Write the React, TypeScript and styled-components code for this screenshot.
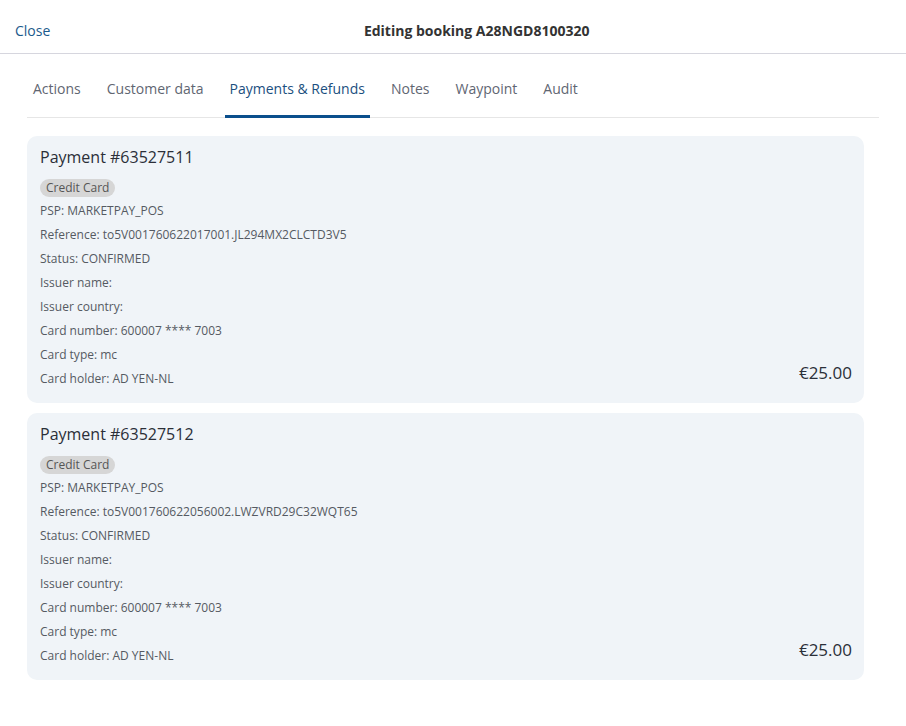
import React from "react";
import styled, { createGlobalStyle } from "styled-components";

const Global = createGlobalStyle`
  html, body { margin: 0; padding: 0; background: #ffffff; }
  body { font-family: "Open Sans", "Liberation Sans", sans-serif; color: #333; }
  * { box-sizing: border-box; }
`;

const Page = styled.div`
  width: 906px;
  min-height: 726px;
  background: #fff;
`;

const Header = styled.header`
  height: 54px;
  display: flex;
  align-items: center;
  padding: 7px 15px 0;
  border-bottom: 1px solid #d6d6de;
`;

const CloseLink = styled.a`
  font-size: 14px;
  color: #1b5a8c;
  cursor: pointer;
`;

const Title = styled.h1`
  flex: 1;
  margin: 0;
  padding-left: 12px;
  text-align: center;
  font-size: 14px;
  font-weight: 700;
  color: #333;
`;

const Body = styled.div`
  padding: 0 27px;
`;

const Tabs = styled.nav`
  display: flex;
  gap: 16px;
  margin-top: 16px;
  padding-left: 1px;
  border-bottom: 1px solid #e6e6e6;
`;

const Tab = styled.button<{ $active?: boolean }>`
  background: none;
  border: none;
  font-family: inherit;
  font-size: 14px;
  padding: 9px 5px 17px;
  margin-bottom: -1px;
  color: ${(p) => (p.$active ? "#1b4f80" : "#5f6672")};
  border-bottom: 3px solid ${(p) => (p.$active ? "#0b4f8c" : "transparent")};
  cursor: pointer;
`;

const List = styled.div`
  display: flex;
  flex-direction: column;
  gap: 10px;
  margin-top: 18px;
  width: 837px;
`;

const Card = styled.section`
  background: #f0f4f8;
  border-radius: 10px;
  padding: 10px 12px 12px 13px;
  display: flex;
  justify-content: space-between;
  align-items: flex-end;
`;

const Info = styled.div`
  display: flex;
  flex-direction: column;
`;

const CardTitle = styled.h2`
  margin: 0 0 11px;
  font-size: 16px;
  font-weight: 400;
  color: #2b2f38;
  line-height: 22px;
`;

const Badge = styled.span`
  align-self: flex-start;
  background: #d6d6d6;
  color: #555;
  border-radius: 9px;
  font-size: 12px;
  line-height: 18px;
  padding: 0 6px;
  margin-bottom: 2px;
`;

const Row = styled.div`
  font-size: 12px;
  line-height: 24px;
  color: #555a62;
`;

const Amount = styled.div`
  font-size: 17px;
  line-height: 24px;
  color: #2b2f38;
  margin-bottom: 6px;
`;

const payments = [
  { id: "63527511", ref: "to5V001760622017001.JL294MX2CLCTD3V5" },
  { id: "63527512", ref: "to5V001760622056002.LWZVRD29C32WQT65" },
];

export default function App() {
  const tabs = ["Actions", "Customer data", "Payments & Refunds", "Notes", "Waypoint", "Audit"];
  return (
    <Page>
      <Global />
      <Header>
        <CloseLink>Close</CloseLink>
        <Title>Editing booking A28NGD8100320</Title>
      </Header>
      <Body>
        <Tabs>
          {tabs.map((t) => (
            <Tab key={t} $active={t === "Payments & Refunds"}>{t}</Tab>
          ))}
        </Tabs>
        <List>
          {payments.map((p) => (
            <Card key={p.id}>
              <Info>
                <CardTitle>Payment #{p.id}</CardTitle>
                <Badge>Credit Card</Badge>
                <Row>PSP: MARKETPAY_POS</Row>
                <Row>Reference: {p.ref}</Row>
                <Row>Status: CONFIRMED</Row>
                <Row>Issuer name:</Row>
                <Row>Issuer country:</Row>
                <Row>Card number: 600007 **** 7003</Row>
                <Row>Card type: mc</Row>
                <Row>Card holder: AD YEN-NL</Row>
              </Info>
              <Amount>€25.00</Amount>
            </Card>
          ))}
        </List>
      </Body>
    </Page>
  );
}
